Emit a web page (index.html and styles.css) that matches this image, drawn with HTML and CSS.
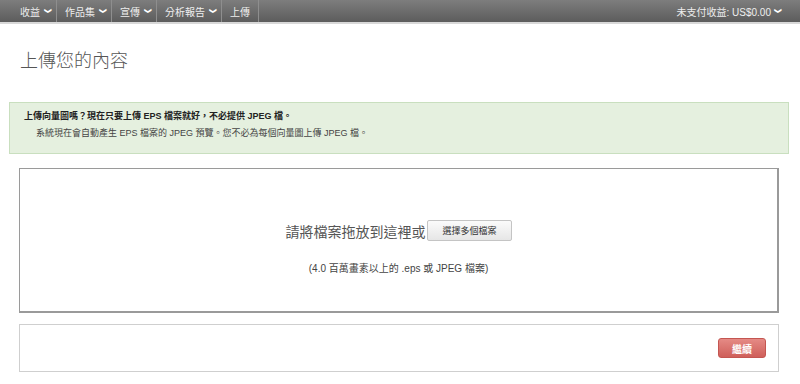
FILE: index.html
```html
<!DOCTYPE html>
<html lang="zh-Hant">
	<head>
		<meta charset="UTF-8" />
		<meta name="viewport" content="width=device-width, initial-scale=1.0" />
		<title>上傳您的內容</title>
		<link rel="stylesheet" href="styles.css">
	</head>
	<body>
		<nav class="topbar">
			<div class="menu">
				<a class="menu-item" href="#">收益 <span class="caret">&#10095;</span></a>
				<a class="menu-item" href="#">作品集 <span class="caret">&#10095;</span></a>
				<a class="menu-item" href="#">宣傳 <span class="caret">&#10095;</span></a>
				<a class="menu-item" href="#">分析報告 <span class="caret">&#10095;</span></a>
				<a class="menu-item" href="#">上傳</a>
			</div>
			<a class="earnings" href="#">未支付收益: US$0.00 <span class="caret">&#10095;</span></a>
		</nav>

		<h1 class="page-title">上傳您的內容</h1>

		<div class="notice">
			<p class="notice-head">上傳向量圖嗎？現在只要上傳 EPS 檔案就好，不必提供 JPEG 檔。</p>
			<p class="notice-body">系統現在會自動產生 EPS 檔案的 JPEG 預覽。您不必為每個向量圖上傳 JPEG 檔。</p>
		</div>

		<div class="dropzone">
			<div class="drop-line">
				<span>請將檔案拖放到這裡或</span>
				<button class="pick-btn">選擇多個檔案</button>
			</div>
			<p class="drop-hint">(4.0 百萬畫素以上的 .eps 或 JPEG 檔案)</p>
		</div>

		<div class="actions">
			<button class="next-btn">繼續</button>
		</div>
	</body>
</html>
```

FILE: styles.css
```css
body {
	font-family: "Liberation Sans", "Noto Sans CJK TC", sans-serif;
	background-color: #ffffff;
	margin: 0;
	color: #333;
}

.topbar {
	display: flex;
	justify-content: space-between;
	align-items: stretch;
	height: 22px;
	background: linear-gradient(#7d7d7d, #5c5c5c);
	border-bottom: 2px solid #d8d8d8;
	padding: 0 19px 0 12px;
}

.menu {
	display: flex;
}

.menu-item {
	display: flex;
	align-items: center;
	padding: 0 5px 0 8px;
	color: #eeeeee;
	font-size: 10px;
	text-decoration: none;
	border-right: 1px solid #8e8e8e;
	gap: 5px;
}

.menu-item:last-child {
	padding-right: 8px;
}

.earnings {
	display: flex;
	align-items: center;
	color: #eeeeee;
	font-size: 10px;
	text-decoration: none;
	gap: 4px;
}

.caret {
	display: inline-block;
	transform: rotate(90deg);
	font-size: 7px;
	font-weight: bold;
	color: #ffffff;
}

.page-title {
	font-size: 18px;
	font-weight: 300;
	color: #555;
	margin: 25px 0 0 20px;
	line-height: 24px;
}

.notice {
	margin: 29px 11px 0 9px;
	background-color: #e5f0df;
	border: 1px solid #c9dfbf;
	padding: 5px 14px 11px;
}

.notice p {
	margin: 0;
	font-size: 9px;
	line-height: 17px;
}

.notice-head {
	font-weight: bold;
	color: #222;
}

.notice-body {
	color: #444;
	padding-left: 12px;
}

.dropzone {
	margin: 14px 21px 0 19px;
	border: 1px solid #9a9a9a;
	border-right-width: 2px;
	border-bottom-width: 2px;
	display: flex;
	flex-direction: column;
	align-items: center;
	padding-top: 51px;
	height: 91px;
}

.drop-line {
	display: flex;
	align-items: center;
	font-size: 14px;
	color: #555;
}

.pick-btn {
	font-family: inherit;
	font-size: 9px;
	color: #333;
	background: linear-gradient(#fbfbfb, #e6e6e6);
	border: 1px solid #c4c4c4;
	border-radius: 2px;
	height: 21px;
	padding: 0 14px;
	margin-left: 2px;
}

.drop-hint {
	margin: 19px 0 0;
	font-size: 10px;
	color: #444;
}

.actions {
	margin: 11px 21px 0 19px;
	height: 46px;
	border: 1px solid #cfcfcf;
	display: flex;
	justify-content: flex-end;
	align-items: center;
	padding-right: 12px;
}

.next-btn {
	font-family: inherit;
	font-size: 10px;
	font-weight: bold;
	color: #ffffff;
	background: linear-gradient(#e58a85, #cf5f5a);
	border: 1px solid #c45651;
	border-radius: 3px;
	width: 48px;
	height: 20px;
}
```
